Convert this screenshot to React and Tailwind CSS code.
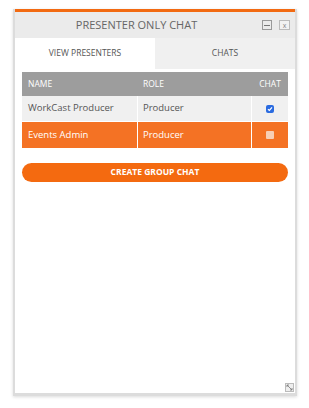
import { useState } from 'react';

const rows = [
  { name: 'WorkCast Producer', role: 'Producer', checked: true, active: false },
  { name: 'Events Admin', role: 'Producer', checked: false, active: true },
];

export default function App() {
  const [tab, setTab] = useState('presenters');

  return (
    <div className="w-[309px] h-[408px] bg-white pt-[9px] pl-[13px]" style={{ fontFamily: '"Open Sans", sans-serif' }}>
      <div className="w-[284px] h-[387px] flex flex-col border-l-2 border-r-2 border-b-[3px] border-[#dcdcdc] bg-white shadow-[0_1px_3px_rgba(0,0,0,0.15)]">
        <div className="h-[3px] bg-[#f26a12]" />
        <div className="h-[26px] bg-[#ebebeb] flex items-center">
          <span className="flex-1 text-center text-[11px] text-[#666] pl-[4px]">PRESENTER ONLY CHAT</span>
          <div className="flex gap-[7px] pr-[5px] pl-[8px]">
            <div className="w-[10px] h-[10px] border border-[#999] flex items-center justify-center">
              <div className="w-[6px] h-px bg-[#777]" />
            </div>
            <div className="w-[11px] h-[10px] border border-[#bbb] bg-[#f2f2f2] flex items-center justify-center text-[7px] leading-none text-[#888]">x</div>
          </div>
        </div>
        <div className="flex h-[31px] text-[8.5px] text-[#555]">
          <button onClick={() => setTab('presenters')} className={`w-[140px] flex items-center justify-center ${tab === 'presenters' ? 'bg-white' : 'bg-[#f0f0f0]'}`}>VIEW PRESENTERS</button>
          <button onClick={() => setTab('chats')} className={`flex-1 flex items-center justify-center ${tab === 'chats' ? 'bg-white' : 'bg-[#f0f0f0]'}`}>CHATS</button>
        </div>
        <div className="px-[7px] pt-[3px]">
          <div className="flex h-[24px] bg-[#9d9d9d] text-white text-[8.5px] items-center">
            <div className="w-[116px] pl-[6px]">NAME</div>
            <div className="w-[114px] pl-[5px]">ROLE</div>
            <div className="flex-1 text-center">CHAT</div>
          </div>
          {rows.map(r => (
            <div key={r.name} className={`flex h-[26px] text-[9.5px] items-center ${r.active ? 'bg-[#f47224] text-white' : 'bg-[#f0f0f0] text-[#555] border-b border-white'}`}>
              <div className="w-[116px] h-full flex items-center pl-[6px] border-r border-white">{r.name}</div>
              <div className="w-[114px] h-full flex items-center pl-[5px] border-r border-white">{r.role}</div>
              <div className="flex-1 flex items-center justify-center">
                {r.checked ? (
                  <div className="w-[8px] h-[8px] rounded-[2px] bg-[#2a6be0] flex items-center justify-center">
                    <svg width="6" height="6" viewBox="0 0 6 6"><path d="M1 3.2 L2.4 4.5 L5 1.4" stroke="white" strokeWidth="1.2" fill="none" /></svg>
                  </div>
                ) : (
                  <div className={`w-[8px] h-[8px] rounded-[1px] ${r.active ? 'bg-[#f7cfb6]' : 'bg-white border border-[#aaa]'}`} />
                )}
              </div>
            </div>
          ))}
          <button className="mt-[15px] w-full h-[19px] rounded-full bg-[#f46a10] text-white text-[8.5px] font-bold">CREATE GROUP CHAT</button>
        </div>
        <div className="flex-1" />
        <div className="flex justify-end pr-[1px] pb-[1px]">
          <div className="w-[9px] h-[9px] border border-[#bbb] bg-[#eee] flex items-center justify-center">
            <svg width="7" height="7" viewBox="0 0 7 7"><path d="M1 1 L6 6 M1 1 L3 1 M1 1 L1 3 M6 6 L4 6 M6 6 L6 4" stroke="#777" strokeWidth="0.8" fill="none" /></svg>
          </div>
        </div>
      </div>
    </div>
  );
}
